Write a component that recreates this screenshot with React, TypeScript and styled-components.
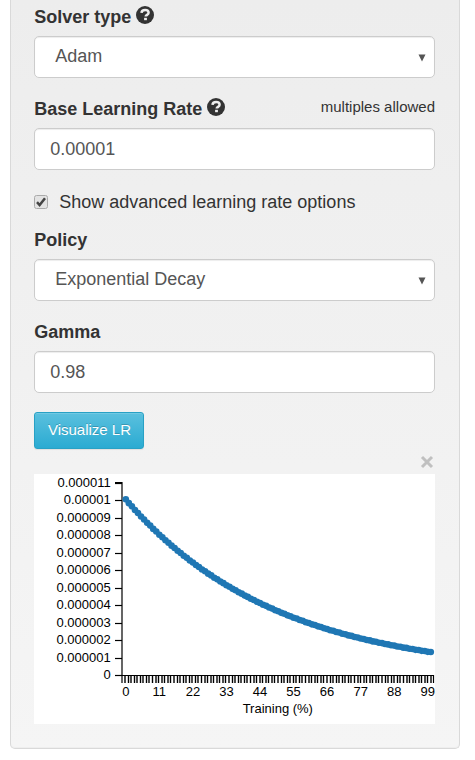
import React from "react";
import styled, { createGlobalStyle, css } from "styled-components";

const Global = createGlobalStyle`
  *, *::before, *::after { box-sizing: border-box; }
  html, body { margin: 0; padding: 0; background: #fff; }
  body {
    height: 760px;
    overflow: hidden;
    font-family: "Liberation Sans", Arial, sans-serif;
    font-size: 18px;
    line-height: 26px;
    color: #333;
  }
`;

const Page = styled.main`
  padding: 0 15px 0 10px;
`;

const Panel = styled.section`
  display: flex;
  flex-direction: column;
  width: 450px;
  height: 749px;
  padding: 4px 24px 0 23px;
  border: 1px solid #d9d9d9;
  border-top: 0;
  border-radius: 0 0 5px 5px;
  background: linear-gradient(#ededed, #f5f5f5);
  box-shadow: inset 0 -1px 1px rgba(0, 0, 0, 0.03);
`;

const Field = styled.div<{ $gap: number }>`
  display: flex;
  flex-direction: column;
  margin-bottom: ${(p) => p.$gap}px;
`;

const LabelRow = styled.div`
  display: flex;
  justify-content: space-between;
  height: 26px;
  margin-bottom: 6px;
`;

const Label = styled.label`
  display: flex;
  gap: 5px;
  padding-left: 0.3px;
  font-weight: bold;
  white-space: nowrap;
`;

const Note = styled.span`
  font-size: 15px;
  line-height: 22px;
`;

const HelpSvg = styled.svg`
  width: 18px;
  height: 18px;
  margin-top: 2px;
`;

const control = css`
  height: 42px;
  width: 100%;
  border: 1px solid #ccc;
  border-radius: 5px;
  background: #fff;
  box-shadow: inset 0 1px 1px rgba(0, 0, 0, 0.075);
  color: #555;
  font: 18px/26px "Liberation Sans", Arial, sans-serif;
`;

const Input = styled.input`
  ${control}
  padding: 7px 15px 6px 15.2px;
  outline: none;
`;

const SelectBox = styled.div`
  ${control}
  display: flex;
  align-items: center;
  justify-content: space-between;
  padding: 0 8px 2px 20.2px;
`;

const ArrowSvg = styled.svg`
  width: 8px;
  height: 8px;
  margin-top: 3px;
`;

const CheckRow = styled.label`
  display: flex;
  gap: 11.2px;
  height: 26px;
  margin-bottom: 12px;
`;

const CheckSvg = styled.svg`
  width: 14px;
  height: 14px;
  margin-top: 6px;
`;

const Button = styled.button`
  width: 110px;
  height: 37px;
  padding: 0 0 3px 1px;
  border: 1px solid #28a1c5;
  border-radius: 3px;
  background: linear-gradient(#5bc0de, #2aabd2);
  box-shadow: inset 0 1px 0 rgba(255, 255, 255, 0.15), 0 1px 1px rgba(0, 0, 0, 0.075);
  color: #fff;
  font: 15px "Liberation Sans", Arial, sans-serif;
  text-shadow: 0 -1px 0 rgba(0, 0, 0, 0.2);
`;

const CloseRow = styled.div`
  display: flex;
  justify-content: flex-end;
  height: 25px;
  padding: 6px 1px 0 0;
`;

const CloseSvg = styled.svg`
  width: 14px;
  height: 14px;
`;

const Chart = styled.svg`
  display: block;
  width: 401px;
  height: 250px;
  background: #fff;
  font: 13px "Liberation Sans", Arial, sans-serif;
`;

const Help = () => (
  <HelpSvg viewBox="0 0 18 18">
    <circle cx="9" cy="9" r="9" fill="#333" />
    <path d="M5.5 6.9C5.6 4.9 7 4.1 9.1 4.1s3.5.9 3.5 2.6c0 2.2-2.9 2-2.9 3.8" fill="none" stroke="#eee" strokeWidth="2.5" />
    <rect x="8.1" y="11.8" width="2.8" height="2.4" fill="#eee" />
  </HelpSvg>
);

const Select = ({ value }: { value: string }) => (
  <SelectBox role="combobox">
    <span>{value}</span>
    <ArrowSvg viewBox="0 0 8 8"><path d="M0.5 0.5h7L4 7.5z" fill="#555" /></ArrowSvg>
  </SelectBox>
);

const Y_LABELS = ["0", "0.000001", "0.000002", "0.000003", "0.000004", "0.000005", "0.000006", "0.000007", "0.000008", "0.000009", "0.00001", "0.000011"];
const X_LABELS = [0, 11, 22, 33, 44, 55, 66, 77, 88, 99];
const BASE = 201.5;
const yOffset = (i: number) => Math.floor(17.5 * i);
const xAt = (i: number) => 91.8 + i * 3.05;
const POINTS = Array.from({ length: 101 }, (_, i) => ({
  x: xAt(i),
  y: BASE - 176 * Math.pow(0.98, i) + (i % 2 ? 0.15 : -0.15),
}));
const tickX = (i: number) => {
  const x = 91 + i * 3.06;
  return i % 2 ? Math.floor(x) + 0.5 : Math.round(x);
};

const LrChart = () => (
  <Chart viewBox="0 0 401 250">
    <path d={`M81 8.5H88V${BASE}H81`} fill="none" stroke="#000" strokeWidth="1.2" />
    {Y_LABELS.map((t, i) => (
      <g key={t}>
        <path d={`M81 ${BASE - yOffset(i)}h7`} stroke="#000" strokeWidth="1.2" />
        <text x="76.7" y={205 - yOffset(i)} textAnchor="end">{t}</text>
      </g>
    ))}
    <path d={`M88 209V${BASE}H399.5V209`} fill="none" stroke="#000" strokeWidth="1.2" />
    {Array.from({ length: 101 }, (_, i) => (
      <path key={i} d={`M${tickX(i)} 202v7`} stroke="#000" strokeWidth="1.4" />
    ))}
    {X_LABELS.map((n) => (
      <text key={n} x={xAt(n)} y="222" textAnchor="middle">{n}</text>
    ))}
    <text x="243.8" y="239" textAnchor="middle">Training (%)</text>
    <polyline points={POINTS.map((p) => `${p.x},${p.y}`).join(" ")} fill="none" stroke="#1f77b4" />
    {POINTS.map((p) => <circle key={p.x} cx={p.x} cy={p.y} r="3.3" fill="#1f77b4" />)}
  </Chart>
);

export default function App() {
  return (
    <Page>
      <Global />
      <Panel>
        <Field $gap={18}>
          <LabelRow><Label>Solver type<Help /></Label></LabelRow>
          <Select value="Adam" />
        </Field>
        <Field $gap={19}>
          <LabelRow><Label>Base Learning Rate<Help /></Label><Note>multiples allowed</Note></LabelRow>
          <Input defaultValue="0.00001" />
        </Field>
        <CheckRow>
          <CheckSvg viewBox="0 0 14 14">
            <rect x="0.5" y="0.5" width="13" height="13" rx="2" fill="#e3e3e3" stroke="#aaa" />
            <path d="M3 7.2l2.6 2.8L11 3.2" fill="none" stroke="#444" strokeWidth="2.5" />
          </CheckSvg>
          Show advanced learning rate options
        </CheckRow>
        <Field $gap={18}>
          <LabelRow><Label>Policy</Label></LabelRow>
          <Select value="Exponential Decay" />
        </Field>
        <Field $gap={19}>
          <LabelRow><Label>Gamma</Label></LabelRow>
          <Input defaultValue="0.98" />
        </Field>
        <Button type="button">Visualize LR</Button>
        <CloseRow>
          <CloseSvg viewBox="0 0 14 14" role="button" aria-label="Close">
            <path d="M2 2l10 10M12 2L2 12" stroke="#c0c0c0" strokeWidth="3" />
          </CloseSvg>
        </CloseRow>
        <LrChart />
      </Panel>
    </Page>
  );
}
